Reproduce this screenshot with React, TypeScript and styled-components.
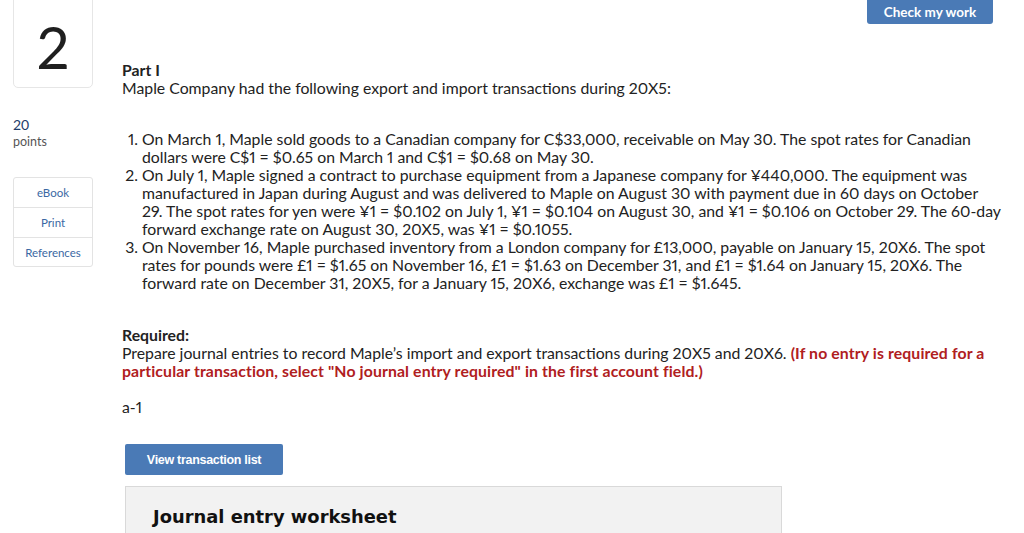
import React from "react";
import styled, { createGlobalStyle } from "styled-components";

const Global = createGlobalStyle`
  html, body { margin: 0; padding: 0; background: #fff; }
  body { font-family: "Lato", "Open Sans", sans-serif; color: #222; }
`;

const Page = styled.div`
  display: flex;
  width: 1024px;
  height: 533px;
  overflow: hidden;
  position: relative;
`;

const Side = styled.aside`
  width: 80px;
  margin-left: 13px;
  display: flex;
  flex-direction: column;
  flex-shrink: 0;
  & > * { flex-shrink: 0; }
`;

const NumBox = styled.div`
  height: 90px;
  margin-top: -2px;
  border: 1px solid #e6e6e6;
  border-radius: 0 0 5px 5px;
  box-sizing: border-box;
  display: flex;
  align-items: center;
  justify-content: center;
  font-size: 58px;
  font-weight: 400;
  color: #1f1f1f;
  padding-top: 6px;
`;

const Points = styled.div`
  margin-top: 28px;
  line-height: 17px;
`;

const PointsNum = styled.div`
  font-size: 14px;
  color: #1d3d6b;
`;

const PointsLabel = styled.div`
  font-size: 12.5px;
  color: #555;
`;

const ToolGroup = styled.div`
  margin-top: 27px;
  border: 1px solid #e3e3e3;
  border-radius: 3px;
  display: flex;
  flex-direction: column;
`;

const ToolLink = styled.div<{ $h: number }>`
  height: ${(p) => p.$h}px;
  display: flex;
  align-items: center;
  justify-content: center;
  font-size: 11.5px;
  color: #3b68a3;
  & + & { border-top: 1px solid #e3e3e3; }
`;

const Main = styled.main`
  margin-left: 29px;
  display: flex;
  flex-direction: column;
  flex: 1;
  font-size: 15.8px;
  line-height: 18px;
  font-variant-numeric: proportional-nums;
  & > * { flex-shrink: 0; }
`;

const TopBar = styled.div`
  height: 0;
  position: relative;
`;

const CheckButton = styled.div`
  position: absolute;
  left: 745px;
  top: 0;
  width: 126px;
  height: 24px;
  background: #4a7ab6;
  color: #fff;
  border-radius: 0 0 3px 3px;
  font-weight: 700;
  font-size: 13.5px;
  display: flex;
  align-items: center;
  justify-content: center;
`;

const Text = styled.div`
  white-space: nowrap;
`;

const Bold = styled.div`
  font-weight: 700;
`;

const Intro = styled.div`
  margin-top: 61px;
`;

const List = styled.ol`
  margin: 33px 0 0 0;
  padding: 0;
  list-style: none;
  white-space: nowrap;
`;

const Item = styled.li`
  display: flex;
`;

const ItemNum = styled.span`
  width: 20px;
  padding-right: 4px;
  box-sizing: border-box;
  text-align: right;
  flex-shrink: 0;
`;

const ItemLines = styled.div`
  display: flex;
  flex-direction: column;
`;

const Required = styled.div`
  margin-top: 34px;
`;

const Red = styled.span`
  color: #b0201e;
  font-weight: 700;
  letter-spacing: 0.12px;
`;

const SubLabel = styled.div`
  margin-top: 18px;
`;

const ViewButton = styled.div`
  margin-top: 28px;
  margin-left: 3px;
  width: 158px;
  height: 31px;
  background: #4a7ab6;
  border-radius: 2px;
  color: #fff;
  font-family: "Liberation Sans", Arial, sans-serif;
  font-weight: 700;
  font-size: 12.5px;
  letter-spacing: -0.3px;
  display: flex;
  align-items: center;
  justify-content: center;
`;

const Worksheet = styled.div`
  margin-top: 11px;
  margin-left: 3px;
  width: 657px;
  height: 80px;
  box-sizing: border-box;
  background: #f2f2f2;
  border: 1px solid #d9d9d9;
  padding: 19px 0 0 27px;
`;

const WorksheetTitle = styled.div`
  font-family: "DejaVu Sans", Verdana, sans-serif;
  font-weight: 700;
  font-size: 17.9px;
  line-height: 22px;
  color: #111;
`;

const items: string[][] = [
  [
    "On March 1, Maple sold goods to a Canadian company for C$33,000, receivable on May 30. The spot rates for Canadian",
    "dollars were C$1 = $0.65 on March 1 and C$1 = $0.68 on May 30.",
  ],
  [
    "On July 1, Maple signed a contract to purchase equipment from a Japanese company for ¥440,000. The equipment was",
    "manufactured in Japan during August and was delivered to Maple on August 30 with payment due in 60 days on October",
    "29. The spot rates for yen were ¥1 = $0.102 on July 1, ¥1 = $0.104 on August 30, and ¥1 = $0.106 on October 29. The 60-day",
    "forward exchange rate on August 30, 20X5, was ¥1 = $0.1055.",
  ],
  [
    "On November 16, Maple purchased inventory from a London company for £13,000, payable on January 15, 20X6. The spot",
    "rates for pounds were £1 = $1.65 on November 16, £1 = $1.63 on December 31, and £1 = $1.64 on January 15, 20X6. The",
    "forward rate on December 31, 20X5, for a January 15, 20X6, exchange was £1 = $1.645.",
  ],
];

export default function App() {
  return (
    <Page>
      <Global />
      <Side>
        <NumBox>2</NumBox>
        <Points>
          <PointsNum>20</PointsNum>
          <PointsLabel>points</PointsLabel>
        </Points>
        <ToolGroup>
          <ToolLink $h={29}>eBook</ToolLink>
          <ToolLink $h={29}>Print</ToolLink>
          <ToolLink $h={28}>References</ToolLink>
        </ToolGroup>
      </Side>
      <Main>
        <TopBar>
          <CheckButton>Check my work</CheckButton>
        </TopBar>
        <Intro>
          <Bold>Part I</Bold>
          <Text>Maple Company had the following export and import transactions during 20X5:</Text>
        </Intro>
        <List>
          {items.map((lines, i) => (
            <Item key={i}>
              <ItemNum>{i + 1}.</ItemNum>
              <ItemLines>
                {lines.map((l, j) => (
                  <span key={j}>{l}</span>
                ))}
              </ItemLines>
            </Item>
          ))}
        </List>
        <Required>
          <Bold>Required:</Bold>
          <Text>
            Prepare journal entries to record Maple’s import and export transactions during 20X5 and 20X6.{" "}
            <Red>(If no entry is required for a</Red>
          </Text>
          <Text>
            <Red>particular transaction, select "No journal entry required" in the first account field.)</Red>
          </Text>
        </Required>
        <SubLabel>a-1</SubLabel>
        <ViewButton>View transaction list</ViewButton>
        <Worksheet>
          <WorksheetTitle>Journal entry worksheet</WorksheetTitle>
        </Worksheet>
      </Main>
    </Page>
  );
}
